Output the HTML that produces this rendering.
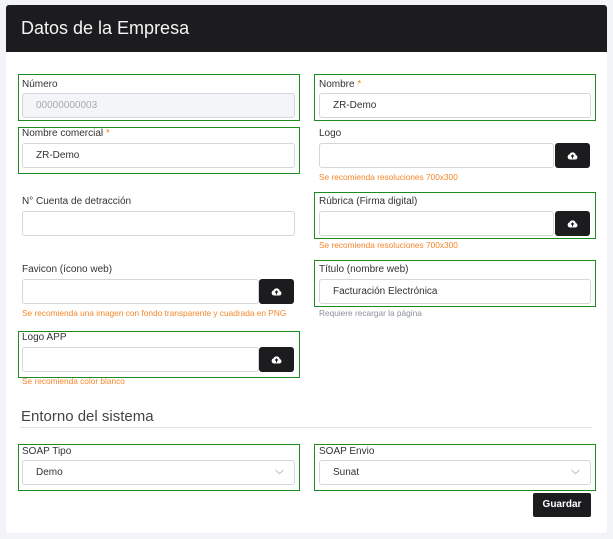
<!DOCTYPE html>
<html><head><meta charset="utf-8"><style>
*{box-sizing:border-box;margin:0;padding:0}
body{width:613px;height:539px;background:#f3f4f7;font-family:"Liberation Sans",sans-serif;position:relative;overflow:hidden;color:#333}
.card{position:absolute;left:6px;top:5px;width:601px;height:528px;background:#fff;border-radius:3px}
.hdr{position:absolute;left:6px;top:5px;width:601px;height:47px;background:#1c1c1f;border-radius:3px 3px 0 0;color:#f4f4f4;font-size:18px;padding:13px 0 0 15px}
.g{position:absolute;border:1px solid #1f8a1f}
.l{position:absolute;font-size:10px;color:#333;line-height:12px}
.l b{color:#f5862a;font-weight:normal}
.i{position:absolute;height:25px;border:1px solid #d4d6da;border-radius:3px;background:#fff;font-size:10px;color:#333;line-height:23px;padding-left:13px}
.bt{position:absolute;height:25px;width:35px;background:#1c1c1f;border-radius:3px}
.bt svg{position:absolute;left:12px;top:8px}
.h{position:absolute;font-size:8.3px;color:#f5862a;line-height:9px;white-space:nowrap}
.ch{position:absolute;right:10px;top:8px}
</style></head><body>
<div class="card"></div>
<div class="hdr">Datos de la Empresa</div>

<div class="g" style="left:18px;top:74px;width:282px;height:47px"></div>
<div class="l" style="left:22px;top:79px">Número</div>
<div class="i" style="left:22px;top:93px;width:273px;background:#f4f5f8;color:#aaa">00000000003</div>

<div class="g" style="left:314px;top:74px;width:282px;height:47px"></div>
<div class="l" style="left:319px;top:79px">Nombre <b>*</b></div>
<div class="i" style="left:319px;top:93px;width:272px">ZR-Demo</div>

<div class="g" style="left:18px;top:127px;width:282px;height:47px"></div>
<div class="l" style="left:22px;top:128px">Nombre comercial <b>*</b></div>
<div class="i" style="left:22px;top:143px;width:273px">ZR-Demo</div>

<div class="l" style="left:319px;top:128px">Logo</div>
<div class="i" style="left:319px;top:143px;width:235px"></div>
<div class="bt" style="left:555px;top:143px"><svg width="11" height="9" viewBox="0 0 11 9"><path d="M3 8.5H8.5A2.3 2.3 0 0 0 8.7 4 3.2 3.2 0 0 0 2.6 3.4 2.6 2.6 0 0 0 3 8.5Z" fill="#fff"/><path d="M5.5 7.5V4.2M4 5.5L5.5 4 7 5.5" stroke="#1c1c1f" fill="none" stroke-width="1"/></svg></div>
<div class="h" style="left:319px;top:173px">Se recomienda resoluciones 700x300</div>

<div class="l" style="left:22px;top:196px">N° Cuenta de detracción</div>
<div class="i" style="left:22px;top:211px;width:273px"></div>

<div class="g" style="left:314px;top:192px;width:282px;height:47px"></div>
<div class="l" style="left:319px;top:196px">Rúbrica (Firma digital)</div>
<div class="i" style="left:319px;top:211px;width:235px"></div>
<div class="bt" style="left:555px;top:211px"><svg width="11" height="9" viewBox="0 0 11 9"><path d="M3 8.5H8.5A2.3 2.3 0 0 0 8.7 4 3.2 3.2 0 0 0 2.6 3.4 2.6 2.6 0 0 0 3 8.5Z" fill="#fff"/><path d="M5.5 7.5V4.2M4 5.5L5.5 4 7 5.5" stroke="#1c1c1f" fill="none" stroke-width="1"/></svg></div>
<div class="h" style="left:319px;top:241px">Se recomienda resoluciones 700x300</div>

<div class="l" style="left:22px;top:264px">Favicon (ícono web)</div>
<div class="i" style="left:22px;top:279px;width:237px"></div>
<div class="bt" style="left:259px;top:279px"><svg width="11" height="9" viewBox="0 0 11 9"><path d="M3 8.5H8.5A2.3 2.3 0 0 0 8.7 4 3.2 3.2 0 0 0 2.6 3.4 2.6 2.6 0 0 0 3 8.5Z" fill="#fff"/><path d="M5.5 7.5V4.2M4 5.5L5.5 4 7 5.5" stroke="#1c1c1f" fill="none" stroke-width="1"/></svg></div>
<div class="h" style="left:22px;top:309px">Se recomienda una imagen con fondo transparente y cuadrada en PNG</div>

<div class="g" style="left:314px;top:260px;width:282px;height:47px"></div>
<div class="l" style="left:319px;top:264px">Título (nombre web)</div>
<div class="i" style="left:319px;top:279px;width:272px">Facturación Electrónica</div>
<div class="h" style="left:319px;top:309px;color:#8a8f99">Requiere recargar la página</div>

<div class="g" style="left:18px;top:331px;width:282px;height:47px"></div>
<div class="l" style="left:22px;top:332px">Logo APP</div>
<div class="i" style="left:22px;top:347px;width:237px"></div>
<div class="bt" style="left:259px;top:347px"><svg width="11" height="9" viewBox="0 0 11 9"><path d="M3 8.5H8.5A2.3 2.3 0 0 0 8.7 4 3.2 3.2 0 0 0 2.6 3.4 2.6 2.6 0 0 0 3 8.5Z" fill="#fff"/><path d="M5.5 7.5V4.2M4 5.5L5.5 4 7 5.5" stroke="#1c1c1f" fill="none" stroke-width="1"/></svg></div>
<div class="h" style="left:22px;top:377px">Se recomienda color blanco</div>

<div style="position:absolute;left:21px;top:408px;font-size:15px;color:#444">Entorno del sistema</div>
<div style="position:absolute;left:20px;top:427px;width:572px;height:1px;background:#e2e3e6"></div>

<div class="g" style="left:18px;top:444px;width:282px;height:47px"></div>
<div class="l" style="left:22px;top:446px">SOAP Tipo</div>
<div class="i" style="left:22px;top:460px;width:273px">Demo<svg class="ch" width="9" height="6" viewBox="0 0 9 6"><path d="M.5 .8 4.5 4.8 8.5 .8" stroke="#bbb" fill="none"/></svg></div>

<div class="g" style="left:314px;top:444px;width:282px;height:47px"></div>
<div class="l" style="left:319px;top:446px">SOAP Envio</div>
<div class="i" style="left:319px;top:460px;width:272px">Sunat<svg class="ch" width="9" height="6" viewBox="0 0 9 6"><path d="M.5 .8 4.5 4.8 8.5 .8" stroke="#bbb" fill="none"/></svg></div>

<div style="position:absolute;left:533px;top:493px;width:58px;height:24px;background:#1c1c1f;border-radius:2px;color:#fff;font-size:10px;font-weight:bold;text-align:center;line-height:24px">Guardar</div>
</body></html>
